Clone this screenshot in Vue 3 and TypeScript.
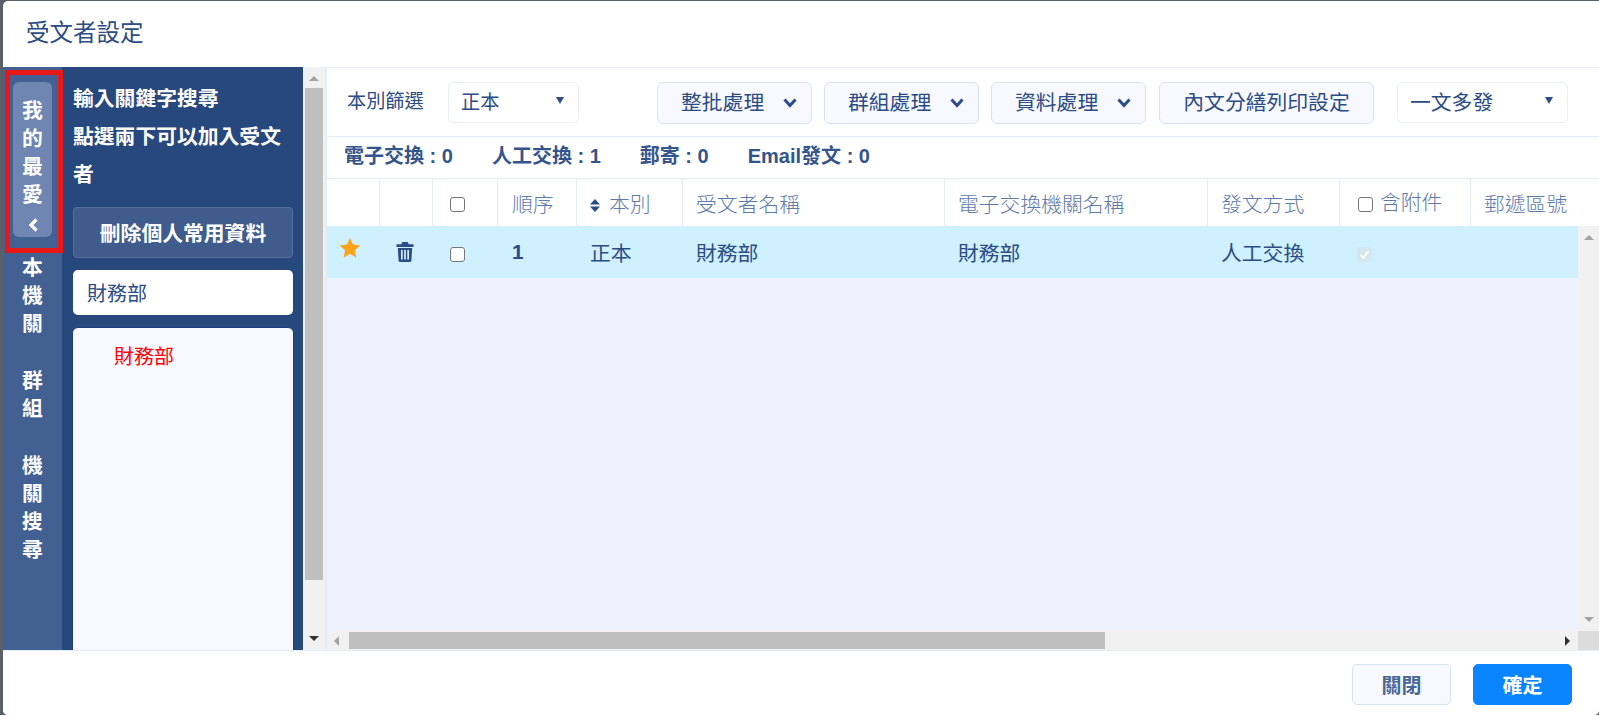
<script setup lang="ts">
const columns = [
  { key: 'fav', label: '' },
  { key: 'del', label: '' },
  { key: 'chk', label: '' },
  { key: 'seq', label: '順序' },
  { key: 'kind', label: '本別' },
  { key: 'name', label: '受文者名稱' },
  { key: 'ex', label: '電子交換機關名稱' },
  { key: 'way', label: '發文方式' },
  { key: 'att', label: '含附件' },
  { key: 'zip', label: '郵遞區號' }
]
const stats = ['電子交換 : 0', '人工交換 : 1', '郵寄 : 0', 'Email發文 : 0']
const tools = ['整批處理', '群組處理', '資料處理']
</script>

<template>
  <div class="modal">
    <header class="head">受文者設定</header>
    <div class="body">
      <nav class="tabs">
        <div class="tab-outline">
          <div class="tab active">
            <span>我</span><span>的</span><span>最</span><span>愛</span>
            <svg class="back" width="10" height="14" viewBox="0 0 10 14"><path d="M8.500 1.500 3 7l5.500 5.500" fill="none" stroke="#fff" stroke-width="3.200"/></svg>
          </div>
        </div>
        <div class="tab"><span>本</span><span>機</span><span>關</span></div>
        <div class="tab"><span>群</span><span>組</span></div>
        <div class="tab"><span>機</span><span>關</span><span>搜</span><span>尋</span></div>
      </nav>
      <aside class="side">
        <p class="hint">輸入關鍵字搜尋</p>
        <p class="hint">點選兩下可以加入受文者</p>
        <button class="del-btn">刪除個人常用資料</button>
        <div class="search">財務部</div>
        <div class="list"><div class="list-item">財務部</div></div>
      </aside>
      <div class="vbar">
        <span class="arrow up"></span>
        <div class="vthumb"></div>
        <span class="arrow down"></span>
      </div>
      <main class="main">
        <div class="toolbar">
          <span class="filter-label">本別篩選</span>
          <div class="select s1"><span>正本</span><i class="caret"></i></div>
          <div class="tools">
            <button v-for="t in tools" :key="t" class="tool">
              <span class="lift">{{ t }}</span>
              <svg width="14" height="10" viewBox="0 0 14 10"><path d="M1.500 1.500 7 7.500l5.500-6" fill="none" stroke="#2b4c84" stroke-width="3"/></svg>
            </button>
            <button class="tool print"><span class="lift">內文分繕列印設定</span></button>
          </div>
          <div class="select s2"><span>一文多發</span><i class="caret"></i></div>
        </div>
        <div class="stats">
          <span v-for="s in stats" :key="s">{{ s }}</span>
        </div>
        <div class="grid">
          <div class="thead">
            <div v-for="c in columns" :key="c.key" class="th">
              <span v-if="c.key === 'chk' || c.key === 'att'" class="check drop"></span>
              <svg v-if="c.key === 'kind'" class="sort" width="10" height="13" viewBox="0 0 10 13"><path d="M5 0 10 5.500H0zM5 13 0 7.500h10z" fill="#2b4c84"/></svg>
              <span :class="{ raised: c.key === 'att' }">{{ c.label }}</span>
            </div>
          </div>
          <div class="tbody">
            <div class="row">
              <div class="td star-cell">
                <svg width="22" height="22" viewBox="0 0 24 24"><path d="M12 1l3.300 7.300 7.900.9-5.900 5.300 1.600 7.800L12 18.400l-6.900 3.900 1.600-7.800L.8 9.200l7.900-.9z" fill="#ffa31a"/></svg>
              </div>
              <div class="td trash-cell">
                <svg width="18" height="20" viewBox="0 0 18 20"><path d="M6.300 0h5.400l1 2.200H17.500V5H.5V2.200h4.800zM1.800 6h14.400l-.8 12.400a1.600 1.600 0 0 1-1.600 1.500H4.200a1.600 1.600 0 0 1-1.600-1.500zM5 8v9.500h1.700V8zm3.150 0v9.500h1.700V8zM11.300 8v9.500H13V8z" fill="#2b4c84" fill-rule="evenodd"/></svg>
              </div>
              <div class="td chk-cell"><span class="check drop"></span></div>
              <div class="td seq">1</div>
              <div class="td">正本</div>
              <div class="td">財務部</div>
              <div class="td">財務部</div>
              <div class="td">人工交換</div>
              <div class="td att-cell">
                <span class="check off drop"><svg width="15" height="15" viewBox="0 0 15 15"><path d="M3.500 8 6.300 11l5-7" fill="none" stroke="#fff" stroke-width="1.800"/></svg></span>
              </div>
              <div class="td"></div>
            </div>
            <div class="v2">
              <span class="arrow up"></span>
              <span class="arrow down lite"></span>
            </div>
          </div>
          <div class="hbar">
            <span class="arrow left"></span>
            <div class="hthumb"></div>
            <span class="arrow right"></span>
            <div class="corner"></div>
          </div>
        </div>
      </main>
    </div>
    <footer class="foot">
      <button class="btn ghost">關閉</button>
      <button class="btn primary">確定</button>
    </footer>
  </div>
</template>

<style>
html, body { margin: 0; height: 100%; background: #5b6068; overflow: hidden; }
</style>

<style scoped>
.modal {
  box-sizing: border-box;
  margin: 1px 0 0 3px;
  height: 714px;
  display: flex;
  flex-direction: column;
  background: #fff;
  border-radius: 5px 0 5px 5px;
  overflow: hidden;
  font-family: "Liberation Sans", "Noto Sans CJK TC", sans-serif;
  color: #2b4c84;
}
.head {
  box-sizing: border-box;
  height: 66px;
  flex: none;
  padding: 14px 0 0 23px;
  font-size: 23.500px;
  line-height: 36px;
  color: #2b4c84;
}
.body { flex: 1; min-height: 0; display: flex; background: #e3ecfa; }
.tabs {
  box-sizing: border-box;
  width: 59px;
  flex: none;
  background: #436093;
  display: flex;
  flex-direction: column;
  color: #fff;
  font-size: 20.8px;
  font-weight: 700;
}
.tab-outline {
  position: relative;
  z-index: 1;
  flex: none;
  margin: 3px 0 1px 2px;
  width: 58px;
  height: 183px;
  box-sizing: border-box;
  border: 5px solid #e81818;
  padding: 7px 0 0 3px;
}
.tab { display: flex; flex-direction: column; align-items: center; }
.tab + .tab { margin-top: 29px; }
.tab span { height: 28px; line-height: 28px; }
.tab.active {
  width: 39px;
  height: 155px;
  padding-top: 15px;
  box-sizing: border-box;
  background: #6f86b3;
  border-radius: 6px;
}
.back { margin-top: 9px; }
.side {
  box-sizing: border-box;
  width: 241px;
  flex: none;
  background: #27487d;
  padding: 13px 10px 0 11px;
  overflow: hidden;
}
.hint {
  margin: 0;
  color: #fff;
  font-size: 20.8px;
  font-weight: 700;
  line-height: 38px;
}
.del-btn {
  display: block;
  box-sizing: border-box;
  width: 100%;
  height: 51px;
  margin-top: 13px;
  padding-bottom: 2px;
  background: #3f5c8c;
  border: 1px solid #56709d;
  border-radius: 4px;
  color: #fff;
  font: 700 20.8px "Liberation Sans", "Noto Sans CJK TC", sans-serif;
}
.search {
  box-sizing: border-box;
  height: 45px;
  margin-top: 12px;
  padding: 2px 0 0 14px;
  background: #fff;
  border-radius: 5px;
  font-size: 20px;
  line-height: 45px;
}
.list {
  box-sizing: border-box;
  height: 400px;
  margin: 12px -1px 0;
  background: #f7f9ff;
  border: 1px solid #1c3f7c;
  border-radius: 6px 6px 0 0;
  padding: 11px 0 0 41px;
}
.list-item { color: #ff0000; font-size: 20px; line-height: 36px; }
.vbar {
  position: relative;
  width: 24px;
  flex: none;
  background: #f1f1f1;
  border-right: 2px solid #e3ecfa;
  box-sizing: border-box;
}
.vthumb {
  position: absolute;
  left: 2px;
  width: 18px;
  top: 21px;
  height: 492px;
  background: #bfbfbf;
}
.arrow { position: absolute; width: 0; height: 0; border-style: solid; border-color: transparent; }
.up { top: 9px; left: 6px; border-width: 0 5px 5px; border-bottom-color: #a3a3a3; }
.down { bottom: 9px; left: 6px; border-width: 5px 5px 0; border-top-color: #333; }
.main { flex: 1; min-width: 0; display: flex; flex-direction: column; background: #fff; }
.toolbar {
  box-sizing: border-box;
  height: 70px;
  flex: none;
  display: flex;
  align-items: center;
  padding: 1px 0 0 20px;
  border-bottom: 1px solid #e3ecfa;
  border-top: 1px solid #e3ecfa;
  font-size: 19.2px;
}
.filter-label { width: 101px; flex: none; padding-bottom: 5px; }
.select {
  box-sizing: border-box;
  height: 41px;
  flex: none;
  display: flex;
  align-items: center;
  justify-content: space-between;
  padding: 0 14px 4px 12px;
  border: 1px solid #e8effa;
  border-radius: 5px;
}
.s1 { width: 131px; font-size: 19.2px; }
.s2 { width: 171px; margin-left: 23px; font-size: 20.8px; }
.caret { width: 0; height: 0; border-style: solid; border-color: #2b4c84 transparent transparent; border-width: 7px 4.500px 0; }
.tools { display: flex; gap: 12px; margin-left: 78px; }
.tool {
  box-sizing: border-box;
  width: 155px;
  height: 42px;
  display: flex;
  align-items: center;
  gap: 19px;
  padding: 0 0 0 23px;
  background: #f7f9ff;
  border: 1px solid #d7e2f4;
  border-radius: 6px;
  color: #2b4c84;
  font: 400 20.8px "Liberation Sans", "Noto Sans CJK TC", sans-serif;
}
.tool.print { width: 215px; padding: 0; justify-content: center; margin-left: 1px; }
.lift { margin-top: -4px; }
.stats {
  box-sizing: border-box;
  height: 42px;
  flex: none;
  display: flex;
  align-items: center;
  gap: 39px;
  padding: 0 0 6px 17px;
  font-size: 20px;
  font-weight: 700;
  color: #34558c;
  border-bottom: 1px solid #e3ecfa;
}
.grid { flex: 1; min-height: 0; display: flex; flex-direction: column; background: #edf2fc; overflow: hidden; }
.thead, .row {
  display: grid;
  grid-template-columns: 53px 53px 65px 79px 106px 262px 263px 132px 131px 128px;
}
.thead { height: 47px; flex: none; background: #fff; }
.th {
  box-sizing: border-box;
  display: flex;
  align-items: center;
  gap: 5px;
  padding-left: 13px;
  border-right: 1px solid #e3ecfa;
  color: #5d7aa8;
  font-size: 20.8px;
  font-weight: 300;
}
.th:last-child { border-right: none; }
.th:nth-child(3) { padding-left: 17px; }
.th:nth-child(4) { padding-left: 14px; }
.th:nth-child(9) { padding-left: 18px; gap: 7px; }
.raised { position: relative; top: -2px; }
.sort { margin: 5px 4px 0 0; }
.tbody { flex: 1; min-height: 0; position: relative; }
.row { height: 52px; background: #cff1ff; }
.td {
  box-sizing: border-box;
  display: flex;
  align-items: center;
  padding-left: 13px;
  font-size: 20.8px;
}
.star-cell { padding: 0 0 8px 12px; }
.trash-cell { padding-left: 16px; }
.chk-cell { padding-left: 17px; }
.att-cell { padding-left: 17px; }
.seq { font-weight: 700; padding-left: 14px; }
.check {
  box-sizing: border-box;
  display: inline-flex;
  flex: none;
  width: 15px;
  height: 15px;
  background: #fff;
  border: 1px solid #777;
  border-radius: 3px;
}
.drop { margin-top: 4px; }
.check.off { background: #d5e6ec; border: none; }
.v2 {
  position: absolute;
  right: 0;
  top: 0;
  bottom: 0;
  width: 21px;
  background: #f1f1f1;
}
.lite.down { border-top-color: #a3a3a3; }
.hbar { position: relative; height: 19px; flex: none; background: #f1f1f1; }
.hthumb { position: absolute; left: 22px; top: 1px; width: 756px; height: 17px; background: #bfbfbf; }
.left { left: 7px; top: 5px; border-width: 5px 5px 5px 0; border-right-color: #a3a3a3; }
.right { right: 29px; top: 5px; border-width: 5px 0 5px 5px; border-left-color: #333; }
.corner { position: absolute; right: 0; top: 0; width: 21px; height: 19px; background: #dcdcdc; }
.foot {
  box-sizing: border-box;
  height: 65px;
  flex: none;
  display: flex;
  justify-content: flex-end;
  gap: 22px;
  padding: 13px 27px 0 0;
  border-top: 1px solid #e3ecfa;
  background: #fff;
}
.btn {
  box-sizing: border-box;
  width: 99px;
  height: 41px;
  border-radius: 5px;
  font: 700 20px "Liberation Sans", "Noto Sans CJK TC", sans-serif;
}
.ghost { background: #f7f9ff; border: 1px solid #d7e2f4; color: #4a6796; }
.primary { background: #0b84ff; border: 1px solid #0b84ff; color: #fff; }
</style>
